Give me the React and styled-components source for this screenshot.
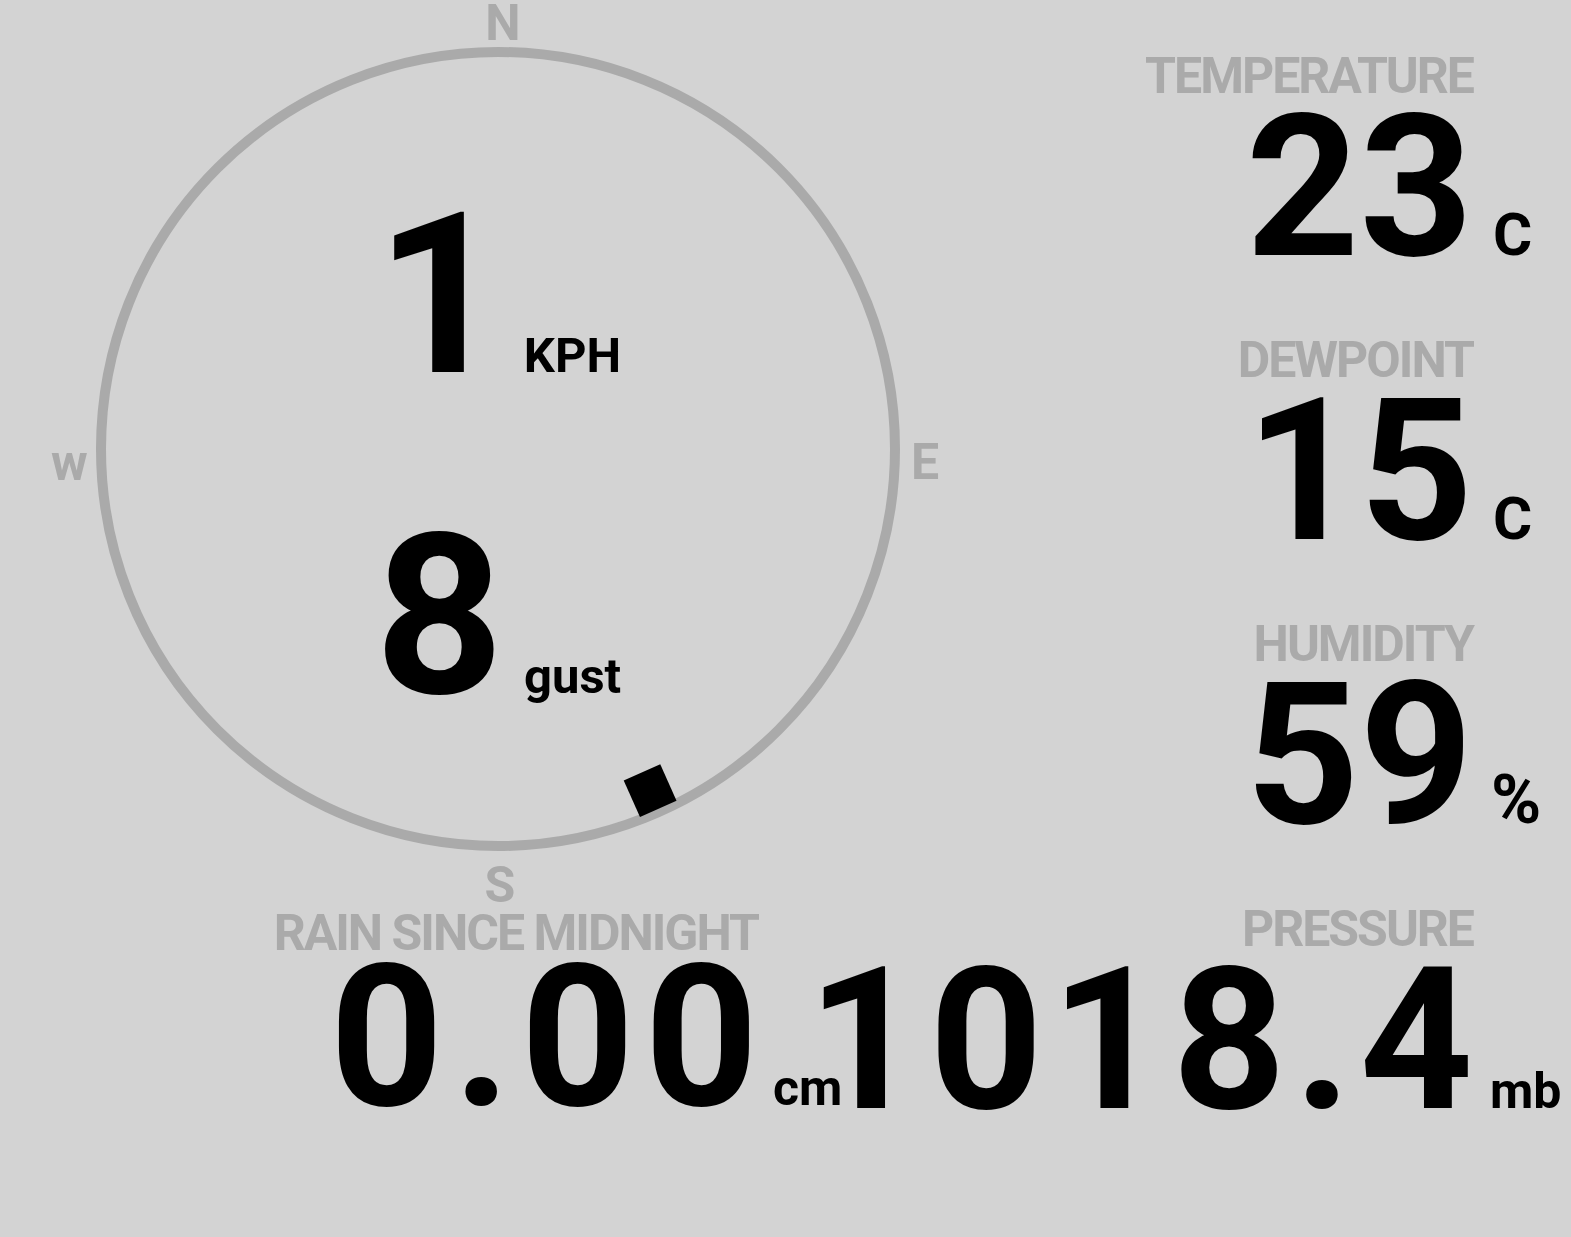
import React from "react";
import styled, { createGlobalStyle } from "styled-components";

const GlobalStyle = createGlobalStyle`
  html, body {
    margin: 0;
    padding: 0;
    background: #d3d3d3;
  }
  body {
    font-family: Roboto, "Liberation Sans", sans-serif;
    font-weight: 700;
    overflow: hidden;
  }
`;

const Page = styled.div`
  display: grid;
  grid-template-columns: 996px minmax(0, 1fr);
  grid-template-rows: 904px auto;
  width: 1571px;
  height: 1237px;
  overflow: hidden;
  background: #d3d3d3;
`;

const Compass = styled.div`
  position: relative;
  display: flex;
  align-items: center;
  justify-content: center;
`;

const Ring = styled.svg`
  position: absolute;
  left: 0;
  top: 0;
`;

const Point = styled.span`
  position: absolute;
  left: ${(p) => p.$x}px;
  top: ${(p) => p.$y}px;
  transform: ${(p) => (p.$center ? "translateX(-50%)" : "none")};
  font-size: 50px;
  line-height: 50px;
  color: #aaa;
`;

const Speeds = styled.div`
  position: relative;
  display: flex;
  flex-direction: column;
  align-items: flex-end;
  gap: 96px;
  margin-top: 8px;
  margin-left: ${(p) => p.$shift}px;
`;

const SpeedRow = styled.div`
  display: flex;
  align-items: baseline;
`;

const Big = styled.span`
  font-size: 225px;
  line-height: 225px;
  color: #000;
`;

const SpeedUnit = styled.span`
  font-size: 49px;
  line-height: 40px;
  color: #000;
  margin-left: ${(p) => p.$gap}px;
`;

const Stats = styled.div`
  display: flex;
  flex-direction: column;
  align-items: flex-end;
  gap: 73px;
  padding-top: 51px;
`;

const Cell = styled.div`
  display: flex;
  justify-content: flex-end;
  padding-right: ${(p) => p.$right || 0}px;
`;

const Reading = styled.div`
  display: flex;
  flex-direction: column;
  align-items: flex-end;
  flex-shrink: 0;
  margin-top: ${(p) => p.$top || 0}px;
`;

const Label = styled.div`
  font-size: 50px;
  line-height: 50px;
  letter-spacing: -2px;
  color: #aaa;
  white-space: nowrap;
  padding-right: ${(p) => p.$unit}px;
`;

const ValueRow = styled.div`
  display: flex;
  align-items: baseline;
  margin-top: ${(p) => p.$gap}px;
`;

const Value = styled.span`
  font-size: 198px;
  line-height: 150px;
  letter-spacing: ${(p) => p.$spacing}px;
  margin-right: ${(p) => -p.$spacing}px;
  color: #000;
  white-space: nowrap;
`;

const Unit = styled.span`
  box-sizing: border-box;
  width: ${(p) => p.$width}px;
  padding-left: ${(p) => p.$pad}px;
  font-size: ${(p) => p.$size}px;
  line-height: 40px;
  color: #000;
  white-space: nowrap;
`;

const Stat = ({ label, value, unit, unitSize = 50, unitWidth = 98, pad = 20, gap = 11, top, spacing = 0 }) => (
  <Reading $top={top}>
    <Label $unit={unitWidth}>{label}</Label>
    <ValueRow $gap={gap}>
      <Value $spacing={spacing}>{value}</Value>
      <Unit $width={unitWidth} $pad={pad} $size={unitSize}>
        {unit}
      </Unit>
    </ValueRow>
  </Reading>
);

const cx = 498;
const cy = 449;
const bearing = 156;
const rad = (bearing * Math.PI) / 180;
const mx = cx + 374 * Math.sin(rad);
const my = cy - 374 * Math.cos(rad);

export default function App() {
  return (
    <Page>
      <GlobalStyle />
      <Compass>
        <Ring width="996" height="904" viewBox="0 0 996 904">
          <circle cx={cx} cy={cy} r="397" fill="none" stroke="#aaa" strokeWidth="10" />
          <rect
            x={mx - 20}
            y={my - 20}
            width="40"
            height="40"
            fill="#000"
            transform={`rotate(${bearing} ${mx} ${my})`}
          />
        </Ring>
        <Point $x={503} $y={-2} $center>N</Point>
        <Point $x={911} $y={437}>E</Point>
        <Point $x={500} $y={860} $center>S</Point>
        <Point $x={51} $y={438}>w</Point>
        <Speeds $shift={0}>
          <SpeedRow>
            <Big>1</Big>
            <SpeedUnit $gap={19}>KPH</SpeedUnit>
          </SpeedRow>
          <SpeedRow>
            <Big>8</Big>
            <SpeedUnit $gap={20}>gust</SpeedUnit>
          </SpeedRow>
        </Speeds>
      </Compass>
      <Stats>
        <Stat label="TEMPERATURE" value="23" unit="C" unitSize={60} />
        <Stat label="DEWPOINT" value="15" unit="C" unitSize={60} />
        <Stat label="HUMIDITY" value="59" unit="%" unitSize={68} pad={18} />
      </Stats>
      <Cell $right={159}>
        <Stat
          label="RAIN SINCE MIDNIGHT"
          value="0.00"
          unit="cm"
          unitWidth={79}
          pad={15}
          gap={4}
          top={4}
          spacing={10}
        />
      </Cell>
      <Cell>
        <Stat label="PRESSURE" value="1018.4" unit="mb" pad={17} spacing={8} />
      </Cell>
    </Page>
  );
}
